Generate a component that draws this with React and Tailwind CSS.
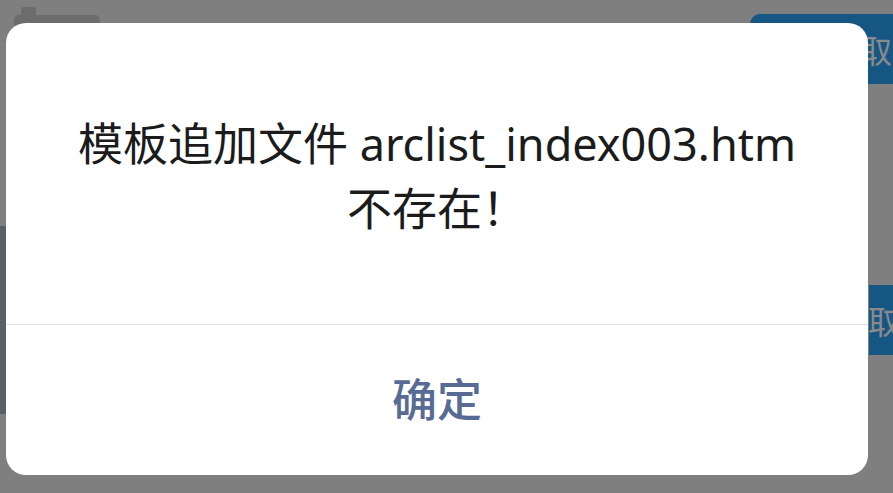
export default function App() {
  return (
    <div
      className="relative w-[893px] h-[493px] overflow-hidden bg-[#7f7f7f]"
      style={{ fontFamily: '"Noto Sans", "Noto Sans CJK SC", sans-serif' }}
    >
      {/* page behind the mask */}
      <div className="flex flex-col h-full">
        <div className="flex items-start justify-between pt-[7px]">
          <div className="ml-[14px] flex flex-col">
            <div className="ml-[7px] w-[15px] h-[8px] rounded-t-[3px] bg-[#6c6c6c]" />
            <div className="w-[86px] h-[20px] rounded-[5px] bg-[#6c6c6c]" />
          </div>
          <div className="mt-[7px] w-[143px] h-[70px] rounded-l-[10px] bg-[#155683] flex items-center justify-end pr-[1px]">
            <span className="text-[32px] text-[#8a8a8a]" style={{ fontFamily: '"Noto Sans CJK SC", sans-serif' }}>取</span>
          </div>
        </div>
        <div className="flex justify-between mt-[136px]">
          <div className="mt-[6px] w-[6px] h-[188px] bg-[#5b6067]" />
          <div className="mt-[65px] w-[24px] h-[70px] bg-[#155683] flex items-center">
            <span className="text-[32px] text-[#8a8a8a] -ml-[1px]" style={{ fontFamily: '"Noto Sans CJK SC", sans-serif' }}>取</span>
          </div>
        </div>
      </div>

      {/* alert dialog */}
      <div className="absolute left-[6px] top-[23px] w-[862px] h-[452px] rounded-[20px] bg-white flex flex-col">
        <div className="h-[301px] flex items-center justify-center px-[30px] pt-[4px]">
          <p className="text-center text-[45px] leading-[65px] text-[#1b1b1b]">
            模板追加文件 arclist_index003.htm
            <br />
            不存在！
          </p>
        </div>
        <div className="border-t border-[#e3e3e3]" />
        <button className="flex-1 flex items-center justify-center text-[45px] font-medium text-[#576b95] pb-[1px]">
          确定
        </button>
      </div>
    </div>
  );
}
